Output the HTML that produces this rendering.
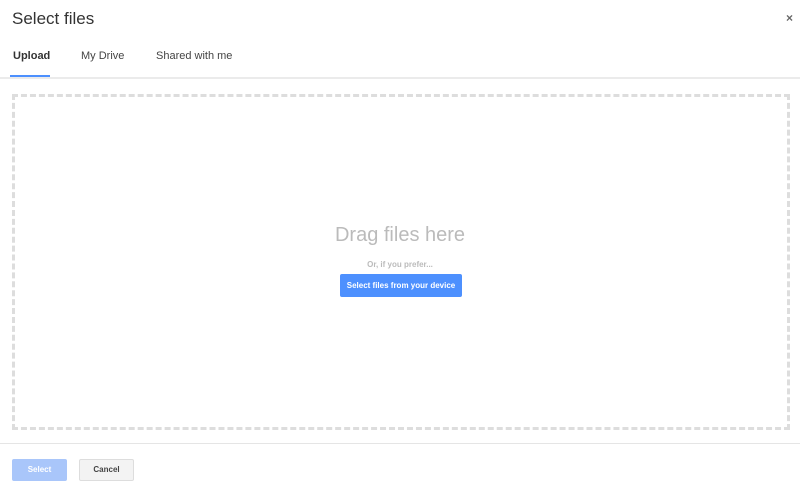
<!DOCTYPE html><html><head><style>
body{margin:0;width:800px;height:489px;background:#fff;font-family:"Liberation Sans",sans-serif;position:relative;overflow:hidden}
div,span{position:absolute}
</style></head><body>
<span style="left:12px;top:9px;font-size:17px;color:#333">Select files</span>
<span style="left:786px;top:11px;font-size:12px;color:#666;font-weight:bold">×</span>
<span style="left:13px;top:50px;font-size:11px;font-weight:bold;color:#333">Upload</span>
<span style="left:81px;top:50px;font-size:11px;color:#444">My Drive</span>
<span style="left:156px;top:50px;font-size:11px;color:#444">Shared with me</span>
<div style="left:10px;top:75px;width:40px;height:2px;background:#4d90fe"></div>
<div style="left:0;top:77px;width:800px;height:2px;background:#ebebeb"></div>
<div style="left:12px;top:94px;width:772px;height:330px;border:3px dashed #ddd"></div>
<span style="left:0;width:800px;text-align:center;top:224px;font-size:20px;color:#bbb">Drag files here</span>
<span style="left:0;width:800px;text-align:center;top:260px;font-size:8px;font-weight:bold;color:#bbb">Or, if you prefer...</span>
<div style="left:340px;top:274px;width:122px;height:23px;background:#4d90fe;border-radius:2px;color:#fff;font-size:8px;font-weight:bold;text-align:center;line-height:23px">Select files from your device</div>
<div style="left:0;top:443px;width:800px;height:1px;background:#e5e5e5"></div>
<div style="left:12px;top:459px;width:55px;height:22px;background:#a9c6fa;border-radius:2px;color:#fff;font-size:8px;font-weight:bold;text-align:center;line-height:22px">Select</div>
<div style="left:79px;top:459px;width:55px;height:22px;background:#f3f3f3;border:1px solid #ddd;box-sizing:border-box;border-radius:2px;color:#444;font-size:8px;font-weight:bold;text-align:center;line-height:20px">Cancel</div>
</body></html>
